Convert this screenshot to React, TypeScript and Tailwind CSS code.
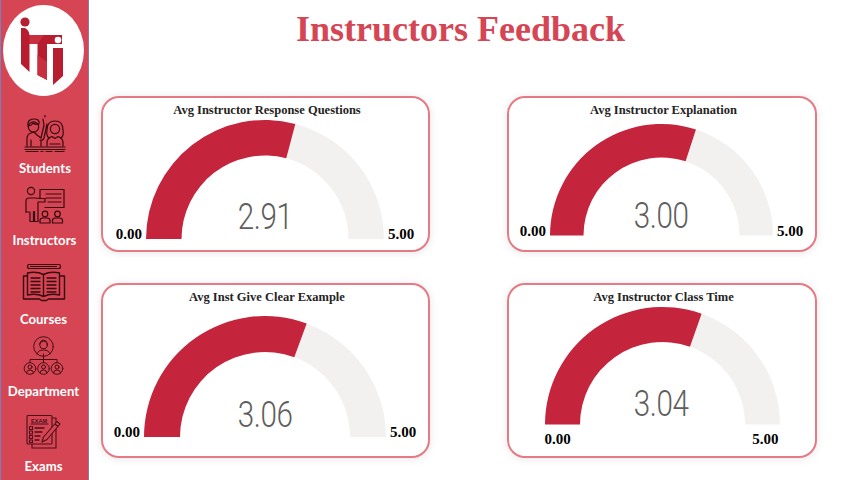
import React from "react";

const serif = "font-['Liberation_Serif',serif]";

function Logo() {
  return (
    <svg width="81" height="91" viewBox="3 5 81 91" className="mt-[5px] ml-[2px] shrink-0">
      <ellipse cx="43.5" cy="50.5" rx="40.5" ry="45.5" fill="#ffffff" />
      <circle cx="25" cy="22" r="4.6" fill="#b41f33" />
      <path d="M21 28 H25 Q29 30 29.500 35 H62 V44 H47 V80 L37.500 75 V44 H29.500 V72 L21 64 Z" fill="#b71c2f" />
      <path d="M29.500 35 H44 L37.500 44 H29.500 Z M37.500 55 L47 62 V80 L37.500 75 Z" fill="#c9303f" />
      <path d="M53 48 H63 V76 L53 85 Z" fill="#b71c2f" />
      <circle cx="58" cy="40" r="3.300" fill="#ffffff" />
    </svg>
  );
}

const stroke = { fill: "none", stroke: "#36090f", strokeWidth: 1.2, strokeLinecap: "round" as const, strokeLinejoin: "round" as const };

function Students() {
  return (
    <svg width="42" height="38" viewBox="24 115 42 38" {...stroke}>
      <circle cx="33.5" cy="127" r="5.2" />
      <path d="M28 126 q-1-7 6-7 q6 0 5 5 q-4 1-6-1 q-2 3-5 3 Z" />
      <path d="M27 146 v-7 q0-5 4-6 l3-1 l3 3 l4 3 l3-13 l-1-6 M45 117 v-1.5 M47 124 l-3 14 q-1 3-4 2 M31 146 v-6 M41 140 v6" />
      <path d="M49 138 q-3-2-2-8 q0-9 8-9 q8 0 8 9 q1 6-2 8" />
      <circle cx="55" cy="129" r="4.6" />
      <path d="M47 146 v-3 q0-5 5-6.500 l3 2 l3-2 q5 1.500 5 6.500 v3 M50 144 h5 M55 144 h5" />
      <path d="M25 147 h40 M25 149.500 h40" />
      <path d="M26 151.500 h12 M41 151.500 h2 M46 151.500 h6 M55 151.500 h9" />
    </svg>
  );
}

function Instructor() {
  return (
    <svg width="40" height="38" viewBox="26 186 40 38" {...stroke}>
      <circle cx="32" cy="191" r="3.6" />
      <path d="M27 212 v-11 q0-3 3-3 h6 l6 .5 l4 0 v3.500 h-7 v19.500 h-3.500 v-10 h-1 v10 h-3.500 V212" />
      <path d="M27 212 h3" />
      <path d="M41 189.500 h24 v18 h-19 M41 189.500 v9" />
      <path d="M47 194 h15 M47 198 h15 M49 202 h13" />
      <circle cx="46" cy="214" r="2.800" />
      <path d="M41 223 v-2.500 q0-2.500 3-2.500 h4 q3 0 3 2.500 v2.500 Z" />
      <circle cx="58.500" cy="214" r="2.800" />
      <path d="M53.500 223 v-2.500 q0-2.500 3-2.500 h4 q3 0 3 2.500 v2.500 Z" />
    </svg>
  );
}

function Book() {
  return (
    <svg width="44" height="38" viewBox="21.500 264 44 38" {...stroke}>
      <path d="M29 264.500 h29 q2 0 2 2 q0 2-2 2 h-29 q-2 0-2-2 q0-2 2-2 Z M30 266.500 h26" />
      <path d="M27 273 q9-2 16 1.500 q7-3.500 16-1.500 v22 q-9-2-16 1.500 q-7-3.500-16-1.500 Z M43 274.500 v22" strokeWidth="1.400" />
      <path d="M27 276 h-4 v23 h16 l2 1.500 h5 l2-1.500 h16 v-23 h-4" strokeWidth="1.400" />
      <path d="M30.500 278 h9 M30.500 281.500 h9 M30.500 285 h9 M30.500 288.500 h9 M30.500 292 h9 M46.500 278 h9 M46.500 281.500 h9 M46.500 285 h9 M46.500 288.500 h9 M46.500 292 h9" strokeWidth="1.300" />
    </svg>
  );
}

function Department() {
  const Small = ({ x }: { x: number }) => (
    <g>
      <circle cx={x} cy="368.500" r="5.800" />
      <circle cx={x} cy="367" r="2" />
      <path d={`M${x - 3.500} 373 q0-3 3.500-3 q3.500 0 3.500 3`} />
    </g>
  );
  return (
    <svg width="42" height="40" viewBox="23 336 42 40" {...stroke} strokeWidth={0.9}>
      <circle cx="43.500" cy="346.500" r="9.800" />
      <circle cx="43.500" cy="345" r="3.800" />
      <path d="M39.500 344 q1-4 4-4 q3 0 4 4 M37 354 q1-4 6.500-4 q5.500 0 6.500 4" />
      <path d="M43.500 354 v8.500 M30 362.500 v-3 h27 v3" />
      <Small x={30} />
      <Small x={43.500} />
      <Small x={57} />
    </svg>
  );
}

function Exam() {
  const d = "#4a0f18";
  return (
    <svg width="36" height="36" viewBox="26 414 36 36" fill="none" stroke={d} strokeWidth="1.100" strokeLinejoin="round" strokeLinecap="round">
      <path d="M52 418 h4 v30 h-24 v-4" />
      <rect x="27" y="415.500" width="25" height="28.500" rx="1" fill="#d64554" />
      <text x="31" y="422.500" fontSize="5.500" fontWeight="700" fill={d} stroke="none" fontFamily="'Liberation Sans',sans-serif" textLength="16">EXAM</text>
      <path d="M31 424 h17" />
      <path d="M29.500 426.500 h3 v3 h-3 Z M29.500 431 h3 v3 h-3 Z M29.500 435.500 h3 v3 h-3 Z M29.500 440 h3 v2.500 h-3 Z" />
      <path d="M35 428 h9 M35 432 h7 M35 436 h5 M35 440 h4" strokeWidth="1.300" />
      <path d="M57 421.500 l3 2.500 l-13 15.500 l-5 2.500 l1.500-5 Z M55 424 l3 2.500" fill="#d64554" />
    </svg>
  );
}

function NavItem({ icon, label, className }: { icon: React.ReactNode; label: string; className: string }) {
  return (
    <div className={`flex flex-col items-center ${className}`}>
      {icon}
      <span className="font-['Lato',sans-serif] text-[13.200px] leading-4 font-bold text-white whitespace-nowrap">{label}</span>
    </div>
  );
}

function arc(r: number, ri: number, from: number, to: number) {
  const pt = (rad: number, a: number) => [r - rad * Math.cos(a), r - rad * Math.sin(a)].map((n) => n.toFixed(2)).join(" ");
  return `M${pt(r, from)} A${r} ${r} 0 0 1 ${pt(r, to)} L${pt(ri, to)} A${ri} ${ri} 0 0 0 ${pt(ri, from)} Z`;
}

function Gauge({ r, ri, value, bottom }: { r: number; ri: number; value: number; bottom: string }) {
  const a = (value / 5) * Math.PI;
  return (
    <div className="relative shrink-0">
      <svg width={2 * r} height={r} viewBox={`0 0 ${2 * r} ${r}`} className="block">
        <path d={arc(r, ri, a, Math.PI)} fill="#f2f1f0" />
        <path d={arc(r, ri, 0, a)} fill="#c4243c" />
      </svg>
      <div className={`absolute inset-x-0 flex justify-center ${bottom}`}>
        <span className="font-['Roboto',sans-serif] font-light text-[37px] leading-none text-[#605e5c] scale-x-[0.8] tracking-[-0.5px]">{value.toFixed(2)}</span>
      </div>
    </div>
  );
}

function Label({ children }: { children: React.ReactNode }) {
  return <span className={`${serif} block text-[15px] leading-[10px] font-bold text-black`}>{children}</span>;
}

function Card({ title, children }: { title: string; children: React.ReactNode }) {
  return (
    <div className="flex flex-col items-center rounded-[18px] border-2 border-[#e67a84] bg-white shadow-[0_1px_8px_rgba(0,0,0,0.1)]">
      <div className={`${serif} h-[22px] pl-[3px] text-[12.500px] leading-[25px] font-bold text-[#252423]`}>{title}</div>
      {children}
    </div>
  );
}

export default function App() {
  return (
    <div className="flex h-[480px] w-[854px] overflow-hidden bg-white">
      <aside className="flex h-full w-[89px] shrink-0 flex-col border-x border-x-[#7a7fc0] bg-[#d64554]">
        <Logo />
        <NavItem className="mt-[19px] gap-[7px] pl-[1px]" icon={<Students />} label="Students" />
        <NavItem className="mt-[10px] gap-[7.500px]" icon={<Instructor />} label="Instructors" />
        <NavItem className="mt-[16.500px] gap-[9px] pr-[2px]" icon={<Book />} label="Courses" />
        <NavItem className="mt-[9px] gap-[7px] pr-[2px]" icon={<Department />} label="Department" />
        <NavItem className="mt-[15px] gap-[8px] pr-[2px]" icon={<Exam />} label="Exams" />
      </aside>
      <main className="ml-[12px] flex w-[716px] flex-col">
        <h1 className={`${serif} h-[96px] pt-[7px] pl-[3px] text-center text-[36px] leading-[44px] font-bold text-[#d64554]`}>Instructors Feedback</h1>
        <div className="grid grid-cols-[329px_310px] grid-rows-[156px_175px] gap-x-[77px] gap-y-[31px]">
          <Card title="Avg Instructor Response Questions">
            <div className="flex items-end gap-1 pr-[1px]">
              <Label>0.00</Label>
              <Gauge r={119} ri={83.500} value={2.91} bottom="bottom-[4px]" />
              <Label>5.00</Label>
            </div>
          </Card>
          <Card title="Avg Instructor Explanation">
            <div className="mt-[4px] flex items-end gap-1 pr-[1px]">
              <Label>0.00</Label>
              <Gauge r={111.500} ri={78} value={3} bottom="bottom-[2px]" />
              <Label>5.00</Label>
            </div>
          </Card>
          <Card title="Avg Inst Give Clear Example">
            <div className="mt-[9px] flex items-end gap-1 pr-[1px]">
              <Label>0.00</Label>
              <Gauge r={121} ri={85} value={3.06} bottom="bottom-[4px]" />
              <Label>5.00</Label>
            </div>
          </Card>
          <Card title="Avg Instructor Class Time">
            <div className="flex w-[235px] flex-col pr-[1px]">
              <Gauge r={117.500} ri={82.500} value={3.04} bottom="bottom-[3px]" />
              <div className="mt-[9px] flex justify-between"><Label>0.00</Label><Label>5.00</Label></div>
            </div>
          </Card>
        </div>
      </main>
    </div>
  );
}
